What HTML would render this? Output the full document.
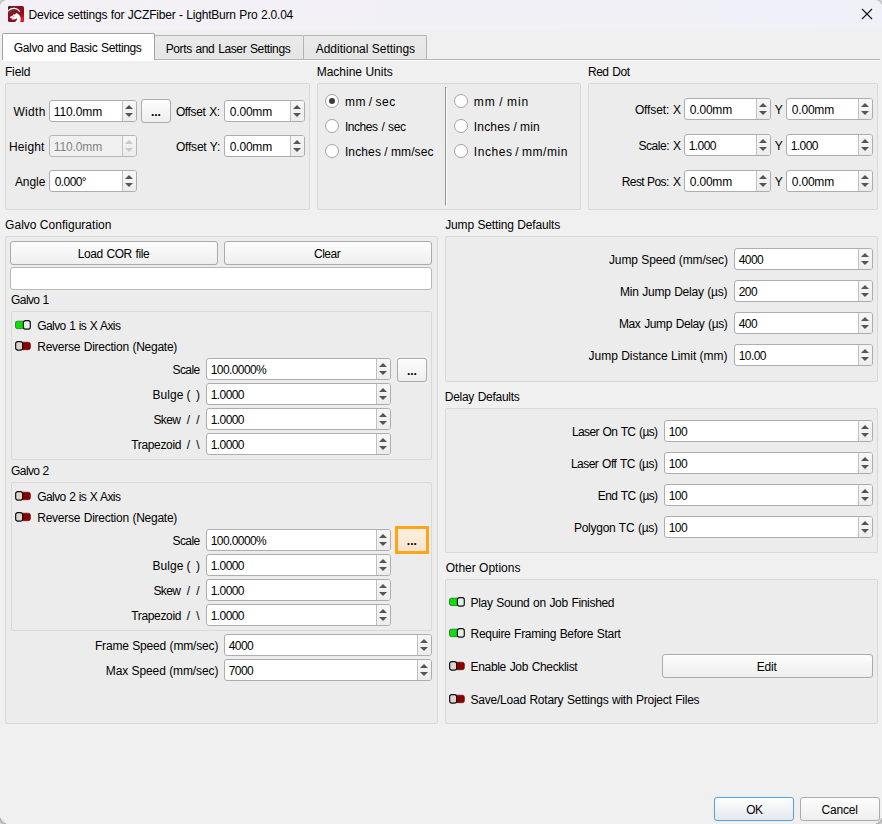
<!DOCTYPE html>
<html><head><meta charset="utf-8"><title>Device settings</title>
<style>
html,body{margin:0;padding:0}
body{width:882px;height:824px;position:relative;overflow:hidden;background:#f0f0f0;font-family:"Liberation Sans",sans-serif;font-size:12px;color:#000}
div,i,b,span{box-sizing:border-box}
#title{position:absolute;left:0;top:0;width:882px;height:30px;background:linear-gradient(90deg,#f4f1f6,#f0f0f8)}
.t{position:absolute;white-space:pre;line-height:24px;height:24px}
.grp{position:absolute;border:1px solid #d9d9d9;background:#ececec;border-radius:2px}
.spin{position:absolute;border:1px solid #adadad;background:#fff;border-radius:3px;overflow:hidden}
.spin.dis{background:#f0f0f0;border-color:#b6b6b6}
.spin .sb{position:absolute;right:0;top:0;width:14px;height:100%;background:linear-gradient(#f6f6f6,#ececec);border-left:1px solid #c0c0c0}
.spin .sb b{position:absolute;left:2px;width:0;height:0;border-left:4px solid transparent;border-right:4px solid transparent}
.spin .sb .u{top:4px;border-bottom:4px solid #555}
.spin .sb .d{bottom:4px;border-top:4px solid #555}
.spin.dis .sb .u{border-bottom-color:#c9c9c9}
.spin.dis .sb .d{border-top-color:#c9c9c9}
.btn{position:absolute;border:1px solid #ababab;border-radius:3px;background:linear-gradient(#fdfdfd,#eeeeee)}
.btn.def{border-color:#44a9f7;background:linear-gradient(#fefefe,#e4e8ed);box-shadow:0 0 0 1px rgba(255,226,200,0.4)}
.edit{position:absolute;border:1px solid #b8b8b8;border-radius:3px;background:#fff}
.hl{position:absolute;border:3px solid #ffa414;background:linear-gradient(#feeedd,#f5e5cf);box-shadow:0 0 0 1px #e6edf5}
.tab{position:absolute;border:1px solid #b4b4b4;border-bottom:none;border-radius:2px 2px 0 0;background:linear-gradient(#eaeaea,#e5e5e5)}
.tab.sel{background:#fefefe;border-color:#a2a2a2}
.tab.sel::after{content:"";position:absolute;left:0;right:0;bottom:-1px;height:2px;background:#fefefe}
#paneline{position:absolute;left:2px;top:59px;width:878px;height:2px;border-top:1px solid #b4b4b4;background:#fcfcfc}
.tg{position:absolute}
.rd{position:absolute;width:14px;height:14px;border:1px solid #a2a2a2;border-radius:50%;background:#fff}
.rd.ck::after{content:"";position:absolute;left:3px;top:3px;width:6px;height:6px;border-radius:50%;background:#3c3c3c}
</style></head>
<body>
<div id="title"></div>
<svg width="6" height="6" style="position:absolute;left:0;top:0"><path d="M0 0H5L0 5Z" fill="#dcdcdc"/><path d="M0 4.6A4.6 4.6 0 0 1 4.6 0" stroke="#c2c2c2" stroke-width="1.3" fill="none"/></svg>
<svg width="6" height="6" style="position:absolute;left:876px;top:0"><path d="M6 0H1L6 5Z" fill="#dcdcdc"/><path d="M6 4.6A4.6 4.6 0 0 0 1.4 0" stroke="#c2c2c2" stroke-width="1.3" fill="none"/></svg>
<svg width="8" height="8" style="position:absolute;left:874px;top:816px"><path d="M8 8H1.5L8 1.5Z" fill="#d4d4d4"/><path d="M8 2A6 6 0 0 1 2 8" stroke="#b2b2b2" stroke-width="1.4" fill="none"/></svg>
<svg width="8" height="8" style="position:absolute;left:0;top:816px"><path d="M0 8H6.5L0 1.5Z" fill="#d4d4d4"/><path d="M0 2A6 6 0 0 0 6 8" stroke="#b2b2b2" stroke-width="1.4" fill="none"/></svg>
<svg id="appicon" width="16" height="16" viewBox="0 0 16 16" style="position:absolute;left:8px;top:6px">
<defs><radialGradient id="ig1" cx="16" cy="14" r="9" gradientUnits="userSpaceOnUse"><stop offset="0" stop-color="#ff1616"/><stop offset="0.35" stop-color="#e01018"/><stop offset="1" stop-color="#8c0e1c" stop-opacity="0"/></radialGradient><radialGradient id="ig2" cx="0" cy="0" r="11" gradientUnits="userSpaceOnUse"><stop offset="0" stop-color="#241818"/><stop offset="0.3" stop-color="#5a2c28"/><stop offset="0.6" stop-color="#703030" stop-opacity="0.8"/><stop offset="1" stop-color="#8c0e1c" stop-opacity="0"/></radialGradient></defs>
<rect x="0" y="0" width="16" height="16" rx="1.6" fill="#8c0e1c"/><rect x="0" y="0" width="16" height="16" rx="1.6" fill="url(#ig2)"/><rect x="0" y="0" width="16" height="16" rx="1.6" fill="url(#ig1)"/>
<path d="M0 4.5 C2 2.1 5 1.5 7.5 2 C9.9 2.5 11.5 3.9 12.3 5.8 L11.2 6 C10.4 4.5 9 3.5 7.2 3.2 C4.8 2.8 2.2 3.5 0 5.7 Z" fill="#fff"/>
<path d="M1.5 11.2 L4.6 9.6 L5.6 8.2 L7 8.4 L8.2 6.9 C10 7.4 11.6 8.8 12.4 11 C13 12.8 12.8 14.6 12.1 16 L6.8 16 C8.4 15.2 9.2 13.8 8.9 12.2 C7.6 13.4 5.4 13.9 3.4 13.4 L4.4 12.4 L2.6 12.3 Z" fill="#fff"/>
<circle cx="5.9" cy="10.3" r="0.55" fill="#b03040"/><circle cx="4.2" cy="11.9" r="0.5" fill="#c86070"/>
</svg>
<div class="t" style="left:28.60px;top:3px;letter-spacing:-0.206px;word-spacing:0.411px;">Device settings for JCZFiber - LightBurn Pro 2.0.04</div>
<svg width="12" height="12" viewBox="0 0 12 12" style="position:absolute;left:861px;top:8px"><path d="M1 1 L11 11 M11 1 L1 11" stroke="#111" stroke-width="1.1" fill="none"/></svg>
<div id="paneline"></div>
<div class="tab" style="left:154px;top:35px;width:150px;height:24px"></div>
<div class="tab" style="left:303px;top:35px;width:124px;height:24px"></div>
<div class="tab sel" style="left:2px;top:33px;width:153px;height:27px"></div>
<div class="t" style="left:13.80px;top:36px;letter-spacing:-0.353px;word-spacing:0.706px;">Galvo and Basic Settings</div>
<div class="t" style="left:165.70px;top:37px;letter-spacing:-0.376px;word-spacing:0.753px;">Ports and Laser Settings</div>
<div class="t" style="left:315.70px;top:37px;">Additional Settings</div>
<div class="t" style="left:4.90px;top:60px;letter-spacing:-0.100px;">Field</div>
<div class="grp" style="left:5px;top:83px;width:305px;height:127px"></div>
<div class="t" style="left:13.40px;top:100px;letter-spacing:0.325px;">Width</div>
<div class="spin" style="left:49px;top:100px;width:88px;height:22px"><i class="sb"><b class="u"></b><b class="d"></b></i></div>
<div class="t" style="left:53.80px;top:100px;letter-spacing:-0.117px;">110.0mm</div>
<div class="btn " style="left:141px;top:99px;width:30px;height:24px"></div>
<div class="t" style="left:151.05px;top:100px;letter-spacing:-0.050px;font-weight:bold;">...</div>
<div class="t" style="left:175.90px;top:100px;letter-spacing:-0.367px;word-spacing:0.733px;">Offset X:</div>
<div class="spin" style="left:224px;top:100px;width:81px;height:22px"><i class="sb"><b class="u"></b><b class="d"></b></i></div>
<div class="t" style="left:229.80px;top:100px;letter-spacing:-0.200px;">0.00mm</div>
<div class="t" style="left:8.90px;top:135px;letter-spacing:0.160px;">Height</div>
<div class="spin dis" style="left:49px;top:135px;width:88px;height:22px"><i class="sb"><b class="u"></b><b class="d"></b></i></div>
<div class="t" style="left:53.80px;top:135px;letter-spacing:-0.117px;color:#828282;">110.0mm</div>
<div class="t" style="left:175.90px;top:135px;letter-spacing:-0.200px;word-spacing:0.400px;">Offset Y:</div>
<div class="spin" style="left:224px;top:135px;width:81px;height:22px"><i class="sb"><b class="u"></b><b class="d"></b></i></div>
<div class="t" style="left:229.80px;top:135px;letter-spacing:-0.200px;">0.00mm</div>
<div class="t" style="left:14.90px;top:170px;letter-spacing:-0.050px;">Angle</div>
<div class="spin" style="left:49px;top:170px;width:88px;height:22px"><i class="sb"><b class="u"></b><b class="d"></b></i></div>
<div class="t" style="left:54.80px;top:170px;letter-spacing:-0.600px;">0.000°</div>
<div class="t" style="left:316.70px;top:60px;">Machine Units</div>
<div class="grp" style="left:317px;top:83px;width:264px;height:127px"></div>
<div style="position:absolute;left:445px;top:87px;width:2px;height:119px;border:1px solid #fff;border-left-color:#919191;border-top-color:#919191"></div>
<div class="rd ck" style="left:325px;top:94px"></div>
<div class="t" style="left:344.90px;top:90px;letter-spacing:0.533px;word-spacing:-1.067px;">mm / sec</div>
<div class="rd" style="left:454px;top:94px"></div>
<div class="t" style="left:473.80px;top:90px;letter-spacing:0.900px;word-spacing:-0.650px;">mm / min</div>
<div class="rd" style="left:325px;top:119px"></div>
<div class="t" style="left:344.90px;top:115px;letter-spacing:-0.429px;word-spacing:0.857px;">Inches / sec</div>
<div class="rd" style="left:454px;top:119px"></div>
<div class="t" style="left:473.80px;top:115px;letter-spacing:0.186px;word-spacing:-0.371px;">Inches / min</div>
<div class="rd" style="left:325px;top:144px"></div>
<div class="t" style="left:344.90px;top:140px;letter-spacing:0.130px;word-spacing:-0.260px;">Inches / mm/sec</div>
<div class="rd" style="left:454px;top:144px"></div>
<div class="t" style="left:473.80px;top:140px;letter-spacing:0.550px;word-spacing:-1.100px;">Inches / mm/min</div>
<div class="t" style="left:588.00px;top:60px;letter-spacing:-0.500px;word-spacing:1.000px;">Red Dot</div>
<div class="grp" style="left:588px;top:83px;width:290px;height:127px"></div>
<div class="t" style="left:634.90px;top:98px;letter-spacing:-0.117px;">Offset:</div>
<div class="t" style="left:673.10px;top:98px;">X</div>
<div class="spin" style="left:684px;top:98px;width:87px;height:22px"><i class="sb"><b class="u"></b><b class="d"></b></i></div>
<div class="t" style="left:689.80px;top:98px;letter-spacing:-0.200px;">0.00mm</div>
<div class="t" style="left:774.70px;top:98px;">Y</div>
<div class="spin" style="left:786px;top:98px;width:87px;height:22px"><i class="sb"><b class="u"></b><b class="d"></b></i></div>
<div class="t" style="left:791.80px;top:98px;letter-spacing:-0.200px;">0.00mm</div>
<div class="t" style="left:638.40px;top:134px;letter-spacing:-0.440px;">Scale:</div>
<div class="t" style="left:673.10px;top:134px;">X</div>
<div class="spin" style="left:684px;top:134px;width:87px;height:22px"><i class="sb"><b class="u"></b><b class="d"></b></i></div>
<div class="t" style="left:688.80px;top:134px;letter-spacing:-0.600px;">1.000</div>
<div class="t" style="left:774.70px;top:134px;">Y</div>
<div class="spin" style="left:786px;top:134px;width:87px;height:22px"><i class="sb"><b class="u"></b><b class="d"></b></i></div>
<div class="t" style="left:790.80px;top:134px;letter-spacing:-0.600px;">1.000</div>
<div class="t" style="left:621.80px;top:170px;letter-spacing:-0.600px;word-spacing:0.200px;">Rest Pos:</div>
<div class="t" style="left:673.10px;top:170px;">X</div>
<div class="spin" style="left:684px;top:170px;width:87px;height:22px"><i class="sb"><b class="u"></b><b class="d"></b></i></div>
<div class="t" style="left:689.80px;top:170px;letter-spacing:-0.200px;">0.00mm</div>
<div class="t" style="left:774.70px;top:170px;">Y</div>
<div class="spin" style="left:786px;top:170px;width:87px;height:22px"><i class="sb"><b class="u"></b><b class="d"></b></i></div>
<div class="t" style="left:791.80px;top:170px;letter-spacing:-0.200px;">0.00mm</div>
<div class="t" style="left:5.10px;top:213px;letter-spacing:0.019px;word-spacing:-0.037px;">Galvo Configuration</div>
<div class="grp" style="left:5px;top:236px;width:433px;height:488px"></div>
<div class="btn " style="left:10px;top:241px;width:208px;height:24px"></div>
<div class="t" style="left:77.70px;top:242px;letter-spacing:-0.425px;word-spacing:0.850px;">Load COR file</div>
<div class="btn " style="left:224px;top:241px;width:208px;height:24px"></div>
<div class="t" style="left:314.00px;top:242px;letter-spacing:-0.500px;">Clear</div>
<div class="edit" style="left:10px;top:267px;width:422px;height:23px"></div>
<div class="t" style="left:11.10px;top:288px;letter-spacing:-0.600px;word-spacing:0.200px;">Galvo 1</div>
<div class="grp" style="left:11px;top:311px;width:421px;height:149px"></div>
<svg class="tg" width="16" height="10" viewBox="0 0 16 10" style="left:15px;top:320px"><rect x="0.5" y="1.2" width="9.5" height="7.4" rx="1.8" fill="#04e204" stroke="#2f6a2f" stroke-width="0.8"/><rect x="8.4" y="0.65" width="6.9" height="8.5" rx="2.1" fill="#e6f0e6" stroke="#101010" stroke-width="1.2"/></svg>
<div class="t" style="left:37.30px;top:314px;letter-spacing:-0.600px;word-spacing:0.800px;">Galvo 1 is X Axis</div>
<svg class="tg" width="16" height="10" viewBox="0 0 16 10" style="left:15px;top:341px"><rect x="6" y="1.2" width="9.4" height="7.5" rx="2" fill="#8e0000" stroke="#4a0808" stroke-width="0.6"/><rect x="0.65" y="0.65" width="7.0" height="8.5" rx="2.1" fill="#dcd3d3" stroke="#101010" stroke-width="1.2"/></svg>
<div class="t" style="left:37.30px;top:335px;letter-spacing:-0.257px;word-spacing:0.514px;">Reverse Direction (Negate)</div>
<div class="t" style="left:172.50px;top:358px;letter-spacing:-0.600px;">Scale</div>
<div class="spin" style="left:206px;top:358px;width:185px;height:22px"><i class="sb"><b class="u"></b><b class="d"></b></i></div>
<div class="t" style="left:210.80px;top:358px;letter-spacing:-0.600px;">100.0000%</div>
<div class="t" style="left:152.50px;top:383px;letter-spacing:0.050px;">Bulge</div>
<div class="t" style="left:186.40px;top:383px;letter-spacing:1.150px;">( )</div>
<div class="spin" style="left:206px;top:383px;width:185px;height:22px"><i class="sb"><b class="u"></b><b class="d"></b></i></div>
<div class="t" style="left:210.80px;top:383px;letter-spacing:-0.600px;">1.0000</div>
<div class="t" style="left:153.40px;top:408px;letter-spacing:-0.600px;">Skew</div>
<div class="t" style="left:186.80px;top:408px;letter-spacing:1.450px;">/ /</div>
<div class="spin" style="left:206px;top:408px;width:185px;height:22px"><i class="sb"><b class="u"></b><b class="d"></b></i></div>
<div class="t" style="left:210.80px;top:408px;letter-spacing:-0.600px;">1.0000</div>
<div class="t" style="left:131.20px;top:433px;letter-spacing:-0.338px;">Trapezoid</div>
<div class="t" style="left:186.80px;top:433px;letter-spacing:1.450px;">/ \</div>
<div class="spin" style="left:206px;top:433px;width:185px;height:22px"><i class="sb"><b class="u"></b><b class="d"></b></i></div>
<div class="t" style="left:210.80px;top:433px;letter-spacing:-0.600px;">1.0000</div>
<div class="btn " style="left:397px;top:358px;width:30px;height:24px"></div>
<div class="t" style="left:407.05px;top:359px;letter-spacing:-0.050px;font-weight:bold;">...</div>
<div class="t" style="left:11.10px;top:459px;letter-spacing:-0.600px;word-spacing:0.200px;">Galvo 2</div>
<div class="grp" style="left:11px;top:482px;width:421px;height:149px"></div>
<svg class="tg" width="16" height="10" viewBox="0 0 16 10" style="left:15px;top:491px"><rect x="6" y="1.2" width="9.4" height="7.5" rx="2" fill="#8e0000" stroke="#4a0808" stroke-width="0.6"/><rect x="0.65" y="0.65" width="7.0" height="8.5" rx="2.1" fill="#dcd3d3" stroke="#101010" stroke-width="1.2"/></svg>
<div class="t" style="left:37.30px;top:485px;letter-spacing:-0.600px;word-spacing:0.800px;">Galvo 2 is X Axis</div>
<svg class="tg" width="16" height="10" viewBox="0 0 16 10" style="left:15px;top:512px"><rect x="6" y="1.2" width="9.4" height="7.5" rx="2" fill="#8e0000" stroke="#4a0808" stroke-width="0.6"/><rect x="0.65" y="0.65" width="7.0" height="8.5" rx="2.1" fill="#dcd3d3" stroke="#101010" stroke-width="1.2"/></svg>
<div class="t" style="left:37.30px;top:506px;letter-spacing:-0.257px;word-spacing:0.514px;">Reverse Direction (Negate)</div>
<div class="t" style="left:172.50px;top:529px;letter-spacing:-0.600px;">Scale</div>
<div class="spin" style="left:206px;top:529px;width:185px;height:22px"><i class="sb"><b class="u"></b><b class="d"></b></i></div>
<div class="t" style="left:210.80px;top:529px;letter-spacing:-0.600px;">100.0000%</div>
<div class="t" style="left:152.50px;top:554px;letter-spacing:0.050px;">Bulge</div>
<div class="t" style="left:186.40px;top:554px;letter-spacing:1.150px;">( )</div>
<div class="spin" style="left:206px;top:554px;width:185px;height:22px"><i class="sb"><b class="u"></b><b class="d"></b></i></div>
<div class="t" style="left:210.80px;top:554px;letter-spacing:-0.600px;">1.0000</div>
<div class="t" style="left:153.40px;top:579px;letter-spacing:-0.600px;">Skew</div>
<div class="t" style="left:186.80px;top:579px;letter-spacing:1.450px;">/ /</div>
<div class="spin" style="left:206px;top:579px;width:185px;height:22px"><i class="sb"><b class="u"></b><b class="d"></b></i></div>
<div class="t" style="left:210.80px;top:579px;letter-spacing:-0.600px;">1.0000</div>
<div class="t" style="left:131.20px;top:604px;letter-spacing:-0.338px;">Trapezoid</div>
<div class="t" style="left:186.80px;top:604px;letter-spacing:1.450px;">/ \</div>
<div class="spin" style="left:206px;top:604px;width:185px;height:22px"><i class="sb"><b class="u"></b><b class="d"></b></i></div>
<div class="t" style="left:210.80px;top:604px;letter-spacing:-0.600px;">1.0000</div>
<div class="hl" style="left:395px;top:526px;width:34px;height:28px"></div>
<div class="t" style="left:406.85px;top:529px;letter-spacing:-0.050px;font-weight:bold;">...</div>
<div class="t" style="left:94.90px;top:634px;letter-spacing:-0.167px;word-spacing:0.333px;">Frame Speed (mm/sec)</div>
<div class="spin" style="left:224px;top:634px;width:208px;height:22px"><i class="sb"><b class="u"></b><b class="d"></b></i></div>
<div class="t" style="left:228.80px;top:634px;letter-spacing:-0.600px;">4000</div>
<div class="t" style="left:105.80px;top:659px;letter-spacing:-0.108px;word-spacing:0.215px;">Max Speed (mm/sec)</div>
<div class="spin" style="left:224px;top:659px;width:208px;height:22px"><i class="sb"><b class="u"></b><b class="d"></b></i></div>
<div class="t" style="left:228.80px;top:659px;letter-spacing:-0.600px;">7000</div>
<div class="t" style="left:445.20px;top:213px;letter-spacing:-0.150px;word-spacing:0.300px;">Jump Setting Defaults</div>
<div class="grp" style="left:445px;top:236px;width:433px;height:146px"></div>
<div class="t" style="left:609.00px;top:248px;letter-spacing:-0.129px;word-spacing:0.257px;">Jump Speed (mm/sec)</div>
<div class="spin" style="left:734px;top:248px;width:139px;height:22px"><i class="sb"><b class="u"></b><b class="d"></b></i></div>
<div class="t" style="left:738.80px;top:248px;letter-spacing:-0.600px;">4000</div>
<div class="t" style="left:620.00px;top:280px;letter-spacing:-0.233px;word-spacing:0.467px;">Min Jump Delay (µs)</div>
<div class="spin" style="left:734px;top:280px;width:139px;height:22px"><i class="sb"><b class="u"></b><b class="d"></b></i></div>
<div class="t" style="left:738.80px;top:280px;letter-spacing:-0.600px;">200</div>
<div class="t" style="left:619.00px;top:312px;letter-spacing:-0.400px;word-spacing:0.800px;">Max Jump Delay (µs)</div>
<div class="spin" style="left:734px;top:312px;width:139px;height:22px"><i class="sb"><b class="u"></b><b class="d"></b></i></div>
<div class="t" style="left:738.80px;top:312px;letter-spacing:-0.600px;">400</div>
<div class="t" style="left:588.60px;top:344px;letter-spacing:-0.024px;word-spacing:0.047px;">Jump Distance Limit (mm)</div>
<div class="spin" style="left:734px;top:344px;width:139px;height:22px"><i class="sb"><b class="u"></b><b class="d"></b></i></div>
<div class="t" style="left:738.80px;top:344px;letter-spacing:-0.600px;">10.00</div>
<div class="t" style="left:444.80px;top:385px;letter-spacing:-0.282px;word-spacing:0.564px;">Delay Defaults</div>
<div class="grp" style="left:445px;top:408px;width:433px;height:145px"></div>
<div class="t" style="left:571.90px;top:420px;letter-spacing:-0.600px;word-spacing:0.833px;">Laser On TC (µs)</div>
<div class="spin" style="left:664px;top:420px;width:209px;height:22px"><i class="sb"><b class="u"></b><b class="d"></b></i></div>
<div class="t" style="left:668.80px;top:420px;letter-spacing:-0.600px;">100</div>
<div class="t" style="left:571.00px;top:452px;letter-spacing:-0.560px;word-spacing:1.120px;">Laser Off TC (µs)</div>
<div class="spin" style="left:664px;top:452px;width:209px;height:22px"><i class="sb"><b class="u"></b><b class="d"></b></i></div>
<div class="t" style="left:668.80px;top:452px;letter-spacing:-0.600px;">100</div>
<div class="t" style="left:597.80px;top:484px;letter-spacing:-0.600px;word-spacing:0.800px;">End TC (µs)</div>
<div class="spin" style="left:664px;top:484px;width:209px;height:22px"><i class="sb"><b class="u"></b><b class="d"></b></i></div>
<div class="t" style="left:668.80px;top:484px;letter-spacing:-0.600px;">100</div>
<div class="t" style="left:573.90px;top:516px;letter-spacing:-0.250px;word-spacing:0.500px;">Polygon TC (µs)</div>
<div class="spin" style="left:664px;top:516px;width:209px;height:22px"><i class="sb"><b class="u"></b><b class="d"></b></i></div>
<div class="t" style="left:668.80px;top:516px;letter-spacing:-0.600px;">100</div>
<div class="t" style="left:445.80px;top:556px;letter-spacing:-0.010px;word-spacing:0.020px;">Other Options</div>
<div class="grp" style="left:445px;top:579px;width:433px;height:145px"></div>
<svg class="tg" width="16" height="10" viewBox="0 0 16 10" style="left:449px;top:597px"><rect x="0.5" y="1.2" width="9.5" height="7.4" rx="1.8" fill="#04e204" stroke="#2f6a2f" stroke-width="0.8"/><rect x="8.4" y="0.65" width="6.9" height="8.5" rx="2.1" fill="#e6f0e6" stroke="#101010" stroke-width="1.2"/></svg>
<div class="t" style="left:470.60px;top:591px;letter-spacing:-0.324px;word-spacing:0.647px;">Play Sound on Job Finished</div>
<svg class="tg" width="16" height="10" viewBox="0 0 16 10" style="left:449px;top:628px"><rect x="0.5" y="1.2" width="9.5" height="7.4" rx="1.8" fill="#04e204" stroke="#2f6a2f" stroke-width="0.8"/><rect x="8.4" y="0.65" width="6.9" height="8.5" rx="2.1" fill="#e6f0e6" stroke="#101010" stroke-width="1.2"/></svg>
<div class="t" style="left:470.60px;top:622px;letter-spacing:-0.305px;word-spacing:0.610px;">Require Framing Before Start</div>
<svg class="tg" width="16" height="10" viewBox="0 0 16 10" style="left:449px;top:661px"><rect x="6" y="1.2" width="9.4" height="7.5" rx="2" fill="#8e0000" stroke="#4a0808" stroke-width="0.6"/><rect x="0.65" y="0.65" width="7.0" height="8.5" rx="2.1" fill="#dcd3d3" stroke="#101010" stroke-width="1.2"/></svg>
<div class="t" style="left:470.60px;top:655px;letter-spacing:-0.333px;word-spacing:0.667px;">Enable Job Checklist</div>
<svg class="tg" width="16" height="10" viewBox="0 0 16 10" style="left:449px;top:694px"><rect x="6" y="1.2" width="9.4" height="7.5" rx="2" fill="#8e0000" stroke="#4a0808" stroke-width="0.6"/><rect x="0.65" y="0.65" width="7.0" height="8.5" rx="2.1" fill="#dcd3d3" stroke="#101010" stroke-width="1.2"/></svg>
<div class="t" style="left:470.60px;top:688px;letter-spacing:-0.236px;word-spacing:0.473px;">Save/Load Rotary Settings with Project Files</div>
<div class="btn " style="left:662px;top:654px;width:211px;height:24px"></div>
<div class="t" style="left:756.85px;top:655px;letter-spacing:-0.233px;">Edit</div>
<div class="btn def" style="left:714px;top:797px;width:80px;height:24px"></div>
<div class="t" style="left:746.25px;top:798px;letter-spacing:-0.600px;">OK</div>
<div class="btn " style="left:800px;top:797px;width:80px;height:24px"></div>
<div class="t" style="left:821.50px;top:798px;letter-spacing:-0.200px;">Cancel</div>
</body></html>
